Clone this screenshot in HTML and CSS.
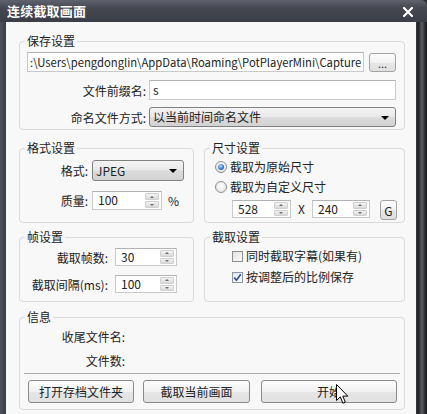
FILE: index.html
```html
<!DOCTYPE html>
<html lang="zh-CN">
<head>
<meta charset="utf-8">
<title>连续截取画面</title>
<link rel="stylesheet" href="styles.css">
</head>
<body>
<div class="window">
  <div class="titlebar">
    <span class="title">连续截取画面</span>
    <svg class="close" width="10" height="10" viewBox="0 0 10 10"><path d="M1 1L9 9M9 1L1 9" stroke="#fff" stroke-width="2.2" stroke-linecap="square"/></svg>
  </div>
  <div class="frame">
    <div class="edge-left"></div>
    <div class="client">
      <fieldset class="group">
        <legend>保存设置</legend>
        <div class="gi g-save">
          <div class="row">
            <div class="input path"><span>:\Users\pengdonglin\AppData\Roaming\PotPlayerMini\Capture</span></div>
            <div class="btn dots">...</div>
          </div>
          <div class="row r2">
            <span class="lbl w-save">文件前缀名:</span>
            <div class="input grow">s</div>
          </div>
          <div class="row">
            <span class="lbl w-save">命名文件方式:</span>
            <div class="select grow"><span>以当前时间命名文件</span><i class="arrow"></i></div>
          </div>
        </div>
      </fieldset>

      <div class="cols c1">
        <fieldset class="group">
          <legend>格式设置</legend>
          <div class="gi g-format">
            <div class="row">
              <span class="lbl w-fmt">格式:</span>
              <div class="select fmt-sel"><span>JPEG</span><i class="arrow"></i></div>
            </div>
            <div class="row">
              <span class="lbl w-fmt">质量:</span>
              <div class="spin q-spin"><span class="val">100</span><span class="arrows"><i class="up"></i><i class="dn"></i></span></div>
              <span class="pct">%</span>
            </div>
          </div>
        </fieldset>
        <fieldset class="group">
          <legend>尺寸设置</legend>
          <div class="gi g-size">
            <div class="opt"><span class="radio on"></span>截取为原始尺寸</div>
            <div class="opt"><span class="radio"></span>截取为自定义尺寸</div>
            <div class="row size-row">
              <div class="spin w-spin"><span class="val">528</span><span class="arrows"><i class="up"></i><i class="dn"></i></span></div>
              <span class="times">X</span>
              <div class="spin h-spin"><span class="val">240</span><span class="arrows"><i class="up"></i><i class="dn"></i></span></div>
              <div class="btn gbtn">G</div>
            </div>
          </div>
        </fieldset>
      </div>

      <div class="cols c2">
        <fieldset class="group">
          <legend>帧设置</legend>
          <div class="gi g-frame">
            <div class="row">
              <span class="lbl w-frm">截取帧数:</span>
              <div class="spin f-spin"><span class="val">30</span><span class="arrows"><i class="up"></i><i class="dn"></i></span></div>
            </div>
            <div class="row">
              <span class="lbl w-frm">截取间隔(ms):</span>
              <div class="spin f-spin"><span class="val">100</span><span class="arrows"><i class="up"></i><i class="dn"></i></span></div>
            </div>
          </div>
        </fieldset>
        <fieldset class="group">
          <legend>截取设置</legend>
          <div class="gi g-cap">
            <div class="opt"><span class="check"></span>同时截取字幕(如果有)</div>
            <div class="opt"><span class="check on"><svg width="9" height="9" viewBox="0 0 9 9"><path d="M1.2 4.6L3.5 7.2L7.8 1.2" fill="none" stroke="#2d4f93" stroke-width="1.6"/></svg></span>按调整后的比例保存</div>
          </div>
        </fieldset>
      </div>

      <fieldset class="group">
        <legend>信息</legend>
        <div class="gi g-info">
          <div class="info-row"><span class="lbl w-info">收尾文件名:</span></div>
          <div class="info-row r2"><span class="lbl w-info">文件数:</span></div>
          <div class="sep"></div>
          <div class="btns">
            <div class="btn b1">打开存档文件夹</div>
            <div class="btn b2">截取当前画面</div>
            <div class="btn b3">开始</div>
          </div>
        </div>
      </fieldset>
    </div>
    <div class="edge-right"></div>
  </div>
  <svg class="cursor" width="13" height="21" viewBox="0 0 13 21"><path d="M0.5 0.5V16.5L4.3 12.9L6.9 19.2L9.3 18.2L6.8 12.1H11.8Z" fill="#fff" stroke="#000" stroke-width="1" stroke-linejoin="miter"/></svg>
</div>
</body>
</html>
```

FILE: styles.css
```css
* { box-sizing: border-box; }
html, body { margin: 0; padding: 0; }
body {
  background: #2b2d33;
  font-family: "Noto Sans CJK SC", "Noto Sans", sans-serif;
  font-size: 12px;
  color: #222;
}
.window {
  width: 427px;
  height: 414px;
  position: relative;
  overflow: hidden;
  display: flex;
  flex-direction: column;
  background: #2b2d33;
}
.titlebar {
  height: 22px;
  flex: none;
  display: flex;
  align-items: center;
  justify-content: space-between;
  padding: 0 14px 0 7px;
  background: linear-gradient(#60636d, #464952 35%, #3b3e47);
  border-top-right-radius: 6px;
  color: #fff;
}
.title {
  font-weight: bold;
  font-size: 13px;
  line-height: 22px;
  letter-spacing: 0.2px;
}
.close { display: block; margin-top: 1px; }
.frame { flex: 1; display: flex; min-height: 0; }
.edge-left {
  width: 6px;
  flex: none;
  background: linear-gradient(90deg, #50535c, #3a3d46);
}
.edge-right {
  width: 11px;
  flex: none;
  background: linear-gradient(90deg, #3c3e44 0, #1e1f23 2px, #4d4f55 5px, #5d5f65 6px, #2a2b30 9px, #141518 11px);
}
.client {
  flex: 1;
  min-width: 0;
  background: #f8f8f8;
  padding: 11px 11px 0 13px;
  display: flex;
  flex-direction: column;
}
.group {
  margin: 0;
  padding: 0;
  border: 1px solid #dadada;
  border-radius: 4px;
  min-width: 0;
}
.group legend {
  padding: 0 2px;
  margin-left: 5px;
  line-height: 16px;
  font-size: 12px;
  color: #222;
}
.gi { display: flex; flex-direction: column; }
.row { display: flex; align-items: center; }
.lbl { text-align: right; flex: none; white-space: nowrap; }
.grow { flex: 1; min-width: 0; }

/* inputs */
.input {
  height: 20px;
  border: 1px solid #c9c9c9;
  border-top-color: #b3b3b3;
  background: #fff;
  padding: 0 3px;
  line-height: 18px;
  white-space: nowrap;
  overflow: hidden;
}
.select {
  height: 20px;
  border: 1px solid #808080;
  border-radius: 3px;
  background: linear-gradient(#f4f4f4, #e9e9e9 48%, #dcdcdc 52%, #d2d2d2);
  padding: 0 3px;
  line-height: 18px;
  display: flex;
  align-items: center;
  justify-content: space-between;
}
.arrow {
  width: 0; height: 0;
  border-left: 4px solid transparent;
  border-right: 4px solid transparent;
  border-top: 4px solid #000;
  margin-right: 3px;
  margin-top: 1px;
}
.btn {
  height: 23px;
  border: 1px solid #8a8a8a;
  border-radius: 3px;
  background: linear-gradient(#fdfdfd, #f1f1f1 50%, #e6e6e6 52%, #e0e0e0);
  display: flex;
  align-items: center;
  justify-content: center;
  color: #222;
  flex: none;
}
.spin {
  display: flex;
  border: 1px solid #c9c9c9;
  border-top-color: #b3b3b3;
  background: #fff;
  flex: none;
}
.spin .val { flex: 1; padding-left: 5px; line-height: 16px; }
.spin .arrows {
  width: 14px;
  margin: 1px 2px 1px 0;
  display: flex;
  flex-direction: column;
  gap: 1px;
}
.spin .arrows i {
  flex: 1;
  background: linear-gradient(#f2f2f2, #dadada);
  border: 1px solid #d0d0d0;
  border-radius: 1px;
  position: relative;
}
.spin .arrows i::after {
  content: "";
  position: absolute;
  left: 50%;
  top: 50%;
  margin-left: -2px;
  border-left: 2px solid transparent;
  border-right: 2px solid transparent;
}
.spin .arrows .up::after { border-bottom: 2px solid #6f6f6f; margin-top: -1px; }
.spin .arrows .dn::after { border-top: 2px solid #6f6f6f; margin-top: -1px; }

/* group 1 */
.g-save { padding: 3px 8px 2px 7px; gap: 7px; }
.g-save .r2 { margin-top: 1px; }
.path {
  flex: 1;
  min-width: 0;
  padding: 0 2px;
  margin-right: 5px;
}
.path span { white-space: nowrap; font-size: 11.25px; }
.dots {
  width: 27px;
  height: 19px;
  border-color: #a3a3a3;
  font-size: 11px;
  line-height: 1;
  padding-top: 2px;
  color: #333;
}
.w-save { width: 119px; margin-right: 3px; }

.cols { display: grid; grid-template-columns: 175px 1fr; column-gap: 10px; }
.c1 { margin-top: 10px; }
.c2 { margin-top: 6px; }

/* group 2 */
.g-format { padding: 4px 0 12px 7px; }
.g-format .row:first-child { height: 21px; }
.g-format .row + .row { margin-top: 10px; }
.w-fmt { width: 61px; margin-right: 4px; }
.fmt-sel { width: 92px; height: 21px; }
.q-spin { width: 70px; height: 19px; }
.pct { margin-left: 6px; }

/* group 3 */
.g-size { padding: 3px 0 2px 10px; }
.opt { display: flex; align-items: center; height: 16px; line-height: 16px; white-space: nowrap; }
.g-size .opt + .opt { margin-top: 4px; }
.radio {
  width: 12px;
  height: 12px;
  border-radius: 50%;
  border: 1px solid #8f8f8f;
  background: radial-gradient(circle at 50% 40%, #ffffff, #dcdcdc);
  margin-right: 3px;
  display: flex;
  align-items: center;
  justify-content: center;
  flex: none;
}
.radio.on::after {
  content: "";
  width: 6px;
  height: 6px;
  border-radius: 50%;
  background: radial-gradient(circle at 40% 35%, #a9dcff, #2467c0 70%, #143f86);
}
.size-row { margin-top: 5px; margin-left: 17px; align-items: flex-start; }
.w-spin { width: 59px; height: 18px; }
.times { width: 21px; text-align: center; line-height: 18px; }
.h-spin { width: 58px; height: 18px; }
.gbtn { width: 17px; height: 20px; margin-left: 10px; border-color: #a3a3a3; }

/* group 4 */
.g-frame { padding: 3px 0 8px 7px; }
.g-frame .row + .row { margin-top: 9px; }
.w-frm { width: 81px; margin-right: 7px; }
.f-spin { width: 62px; height: 18px; }

/* group 5 */
.g-cap { padding: 3px 0 16px 27px; }
.g-cap .opt + .opt { margin-top: 5px; }
.check {
  width: 11px;
  height: 11px;
  border: 1px solid #8f8f8f;
  background: linear-gradient(135deg, #e2e2e2, #fbfbfb);
  margin-right: 3px;
  flex: none;
  display: flex;
  align-items: center;
  justify-content: center;
}
.check.on { background: linear-gradient(135deg, #dfe6f2, #ffffff); border-color: #8c95a8; }
.check svg { display: block; }

/* group 6 */
.c2 + .group { margin-top: 7px; }
.g-info { padding: 4px 4px 6px 4px; }
.info-row { height: 16px; line-height: 16px; display: flex; }
.info-row.r2 { margin-top: 8px; }
.w-info { width: 101px; }
.sep { height: 1px; background: #a9a9a9; margin-top: 4px; }
.btns { display: flex; margin-top: 6px; padding-left: 4px; }
.b1 { width: 106px; }
.b2 { width: 107px; margin-left: 9px; }
.b3 { width: 136px; margin-left: 11px; }

.cursor { position: absolute; left: 336px; top: 384px; }
```
